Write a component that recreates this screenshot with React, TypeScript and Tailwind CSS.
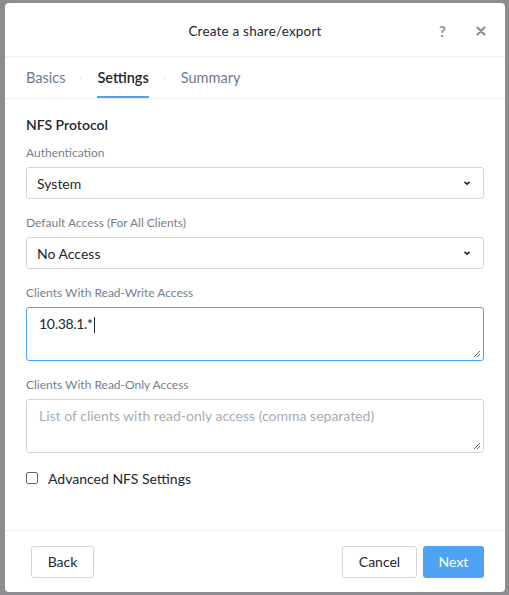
import React from 'react';

const Chevron = () => (
  <svg className="w-[8px] h-[8px] shrink-0" viewBox="0 0 8 8" fill="none" stroke="#22272e" strokeWidth="1.6">
    <path d="M1.5 2.8 L4 5.2 L6.5 2.8" />
  </svg>
);

const Grip = () => (
  <svg className="absolute right-[2px] bottom-[2px] w-[8px] h-[8px]" viewBox="0 0 8 8" stroke="#555" strokeWidth="0.9">
    <path d="M1 7 L7 1 M4 7 L7 4" />
  </svg>
);

const App: React.FC = () => {
  const tabs = ['Basics', 'Settings', 'Summary'];

  return (
    <div className="w-[509px] h-[595px] bg-[#8b8d91] pt-[3px] pl-[5px] font-['Lato','Open_Sans',sans-serif] overflow-hidden">
      <div className="w-[500px] h-[589px] bg-white rounded-[4px] flex flex-col">
        {/* Header */}
        <div className="h-[54px] flex items-center relative border-b border-[#eceef1] shrink-0 pt-[3px]">
          <div className="flex-1 text-center text-[13.5px] text-[#22272e] tracking-[0.2px]">Create a share/export</div>
          <div className="absolute right-[19px] top-0 h-full flex items-center gap-[30px] pt-[3px] text-[#8391a5]">
            <span className="text-[15px] font-bold">?</span>
            <svg className="w-[10px] h-[10px]" viewBox="0 0 10 10" stroke="#8391a5" strokeWidth="2.2" strokeLinecap="round">
              <path d="M1.5 1.5 L8.5 8.5 M8.5 1.5 L1.5 8.5" />
            </svg>
          </div>
        </div>

        {/* Tabs */}
        <div className="h-[42px] flex items-stretch px-[21px] gap-[15px] border-b border-[#eceef1] shrink-0">
          {tabs.map((t, i) => (
            <React.Fragment key={t}>
              {i > 0 && <span className="self-center w-[2px] h-[2px] rounded-full bg-[#e3e6ea]" />}
              <div
                className={
                  'flex items-center text-[14.5px] border-b-2 pt-[3px] ' +
                  (t === 'Settings'
                    ? 'text-[#22272e] font-semibold border-[#4ea2f0]'
                    : 'text-[#6a7b90] border-transparent')
                }
              >
                {t}
              </div>
            </React.Fragment>
          ))}
        </div>

        {/* Body */}
        <div className="flex-1 px-[21px] pt-[17px]">
          <div className="text-[14px] font-semibold text-[#22272e] leading-[18px]">NFS Protocol</div>

          <div className="mt-[11px] text-[12px] text-[#737f8e] leading-[16px]">Authentication</div>
          <div className="mt-[6px] h-[32px] border border-[#d3d7dc] rounded-[3px] flex items-center justify-between pl-[10px] pr-[12px] text-[14px] text-[#22272e]">
            <span>System</span>
            <Chevron />
          </div>

          <div className="mt-[16px] text-[12px] text-[#737f8e] leading-[16px]">Default Access (For All Clients)</div>
          <div className="mt-[6px] h-[32px] border border-[#d3d7dc] rounded-[3px] flex items-center justify-between pl-[10px] pr-[12px] text-[14px] text-[#22272e]">
            <span>No Access</span>
            <Chevron />
          </div>

          <div className="mt-[16px] text-[12px] text-[#737f8e] leading-[16px]">Clients With Read-Write Access</div>
          <div className="mt-[6px] h-[54px] border border-[#4ea2f0] rounded-[3px] relative pl-[12px] pt-[6px] text-[14px] text-[#22272e] leading-[20px]">
            <span className="tracking-[-0.3px]">10.38.1.*</span>
            <span className="inline-block w-px h-[16px] bg-[#22272e] align-middle ml-[1px]" />
            <Grip />
          </div>

          <div className="mt-[16px] text-[12px] text-[#737f8e] leading-[16px]">Clients With Read-Only Access</div>
          <div className="mt-[6px] h-[54px] border border-[#d3d7dc] rounded-[3px] relative pl-[12px] pt-[6px] text-[14px] text-[#a6adb7] leading-[20px]">
            List of clients with read-only access (comma separated)
            <Grip />
          </div>

          <div className="mt-[16px] h-[18px] flex items-center gap-[10px]">
            <span className="w-[12px] h-[12px] border border-[#5d6b7e] rounded-[2px]" />
            <span className="text-[14px] text-[#22272e]">Advanced NFS Settings</span>
          </div>
        </div>

        {/* Footer */}
        <div className="h-[62px] border-t border-[#eceef1] flex items-center justify-between pl-[26px] pr-[21px] shrink-0">
          <button className="h-[32px] w-[63px] border border-[#d3d7dc] rounded-[3px] text-[14px] text-[#22272e] bg-white">Back</button>
          <div className="flex gap-[6px]">
            <button className="h-[32px] w-[75px] border border-[#d3d7dc] rounded-[3px] text-[14px] text-[#22272e] bg-white">Cancel</button>
            <button className="h-[32px] w-[61px] rounded-[3px] text-[14px] text-white bg-[#4fa3f4]">Next</button>
          </div>
        </div>
      </div>
    </div>
  );
};

export default App;
